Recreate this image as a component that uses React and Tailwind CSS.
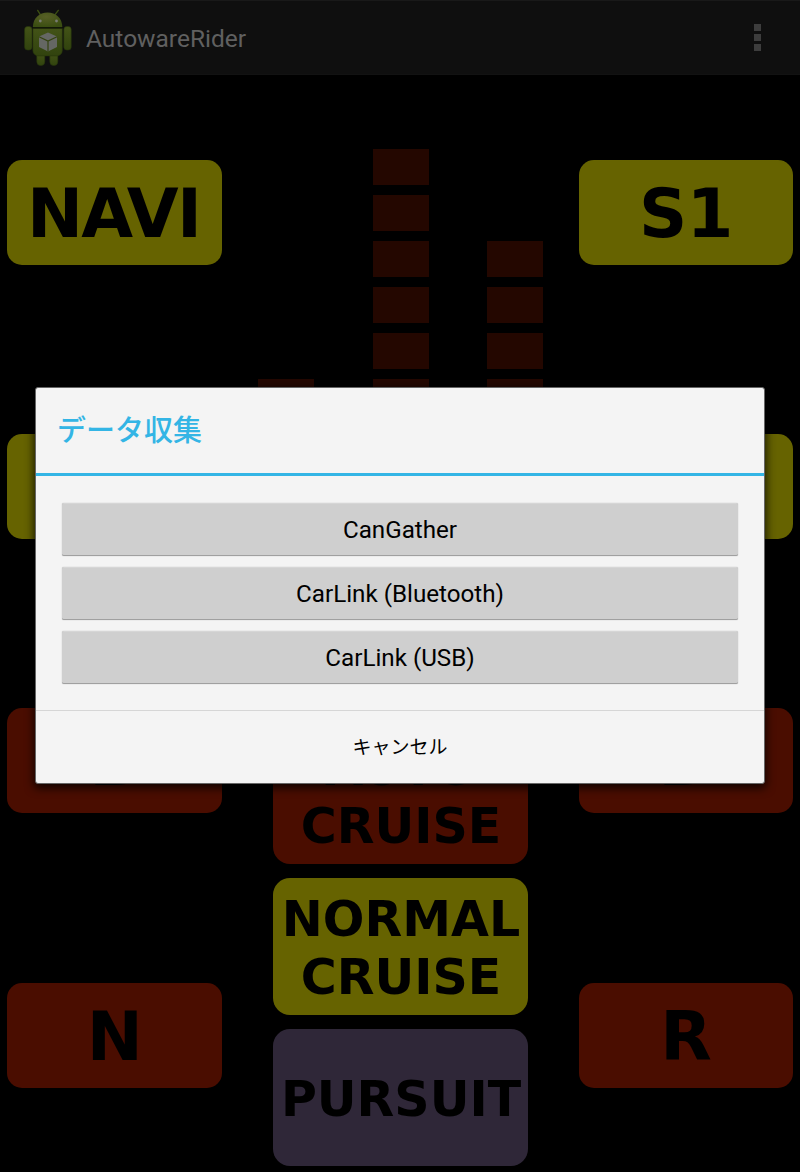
const KEY = {
  yellow: 'bg-[#666300]',
  red: 'bg-[#4a0d00]',
  purple: 'bg-[#2f2738]',
};

function SideKey({ label, color, tight = false }) {
  return (
    <div className={`flex h-[105px] w-full shrink-0 items-center justify-center rounded-[15px] pt-[4px] text-[67px] leading-none font-bold ${tight ? 'pr-[2px] tracking-[-1.8px]' : 'tracking-[-0.5px]'} ${KEY[color]}`}>
      {label}
    </div>
  );
}

function ModeKey({ lines, color }) {
  return (
    <div className={`flex h-[137px] w-full shrink-0 flex-col items-center justify-center rounded-[17px] pt-[4px] pl-px text-[49px] leading-[58px] font-bold whitespace-nowrap ${KEY[color]}`}>
      {lines.map((line) => (
        <span key={line}>{line}</span>
      ))}
    </div>
  );
}

function Meter({ count }) {
  return (
    <div className="flex w-14 flex-col justify-end gap-[10px]">
      {Array.from({ length: count }, (_, i) => (
        <div key={i} className="h-9 shrink-0 bg-[#240700]" />
      ))}
    </div>
  );
}

function RobotIcon() {
  return (
    <svg className="h-[60px] w-[50px] shrink-0" viewBox="0 0 50 60">
      <defs>
        <linearGradient id="body" x1="0" x2="0" y1="0" y2="1">
          <stop offset="0" stopColor="#435317" />
          <stop offset="1" stopColor="#31430e" />
        </linearGradient>
        <radialGradient id="head" cx=".45" cy=".3" r=".7">
          <stop offset="0" stopColor="#575f26" />
          <stop offset="1" stopColor="#3b4e12" />
        </radialGradient>
      </defs>
      <path d="M14.7 2.4 17.2 6.4M35.3 2.4 32.2 6.4" stroke="#3b4e12" strokeWidth="1.4" strokeLinecap="round" />
      <g fill="url(#body)" stroke="#27360b" strokeWidth=".6">
        <rect x="1.6" y="18.5" width="7.4" height="23.5" rx="3" />
        <rect x="40.8" y="18.5" width="7.4" height="23.5" rx="3" />
        <path d="M13.8 45h8v8.6a4 4 0 0 1-8 0zM26.8 45h8v8.6a4 4 0 0 1-8 0z" />
        <path d="M9.9 20.4h29.4v22a5.5 5.5 0 0 1-5.5 5.5H15.4a5.5 5.5 0 0 1-5.5-5.5z" />
      </g>
      <path d="M9.9 19C9.9 10 16.4 4.4 24.6 4.4s14.7 5.6 14.7 14.6z" fill="url(#head)" />
      <path d="M9.9 19.8h29.4" stroke="#151c07" strokeWidth="1" />
      <circle cx="17.3" cy="13" r="1.4" fill="#777b72" />
      <circle cx="33.5" cy="13" r="1.4" fill="#777b72" />
      <path d="M25 24.4 34 28.6V39L25 43.4 16 39V28.6z" fill="#656763" />
      <path d="m16 28.7 9 4.4 9-4.4M25 33.1v10.3" stroke="#34420f" strokeWidth="1.2" fill="none" />
    </svg>
  );
}

function DialogButton({ children }) {
  return (
    <button className="h-[53px] w-full rounded-[2px] border-t border-b border-t-[#d6d6d6] border-b-[#a0a0a0] bg-[#cfcfcf] pt-[2px] text-[24.2px] leading-none text-black shadow-[0_0_1px_#999]">
      {children}
    </button>
  );
}

export default function App() {
  return (
    <div className="relative flex h-[1172px] w-[800px] flex-col overflow-hidden bg-black font-['Roboto','Noto_Sans_CJK_JP',sans-serif]">
      <header className="flex h-[75px] shrink-0 items-center border-t border-b border-t-[#191919] border-b-[#121212] bg-[#0f0f0f] pr-[39px] pl-[23px] text-[#606060]">
        <RobotIcon />
        <h1 className="ml-[13px] pt-[3px] text-[24.5px] leading-none font-normal">AutowareRider</h1>
        <div className="ml-auto flex flex-col gap-[3px]">
          <div className="size-[7px] bg-[#3d3d3d]" />
          <div className="size-[7px] bg-[#3d3d3d]" />
          <div className="size-[7px] bg-[#3d3d3d]" />
        </div>
      </header>

      <main className="flex min-h-0 flex-1 font-['DejaVu_Sans',sans-serif] text-black">
        <div className="flex w-[229px] shrink-0 flex-col gap-[169.3px] pt-[84.9px] pr-[7.3px] pl-[7.4px]">
          <SideKey label="NAVI" color="yellow" tight />
          <SideKey label="MAP" color="yellow" />
          <SideKey label="B" color="red" />
          <SideKey label="N" color="red" />
        </div>

        <div className="flex w-[342px] shrink-0 flex-col">
          <div className="flex h-[652px] shrink-0 justify-between pr-7 pb-9 pl-[29px]">
            <Meter count={7} />
            <Meter count={12} />
            <Meter count={10} />
          </div>
          <div className="flex flex-col gap-[14px] pr-[43px] pl-[44px]">
            <ModeKey lines={['AUTO', 'CRUISE']} color="red" />
            <ModeKey lines={['NORMAL', 'CRUISE']} color="yellow" />
            <ModeKey lines={['PURSUIT']} color="purple" />
          </div>
        </div>

        <div className="flex w-[229px] shrink-0 flex-col gap-[169.2px] pt-[85px] pr-[7.5px] pl-[8.3px]">
          <SideKey label="S1" color="yellow" />
          <SideKey label="S2" color="yellow" />
          <SideKey label="D" color="red" />
          <SideKey label="R" color="red" />
        </div>
      </main>

      <section
        role="dialog"
        className="absolute top-[387px] left-[35px] flex h-[397px] w-[730px] flex-col rounded-[3px] border border-[#666] bg-[#f4f4f4] shadow-[0_3px_10px_1px_rgba(0,0,0,0.8)]"
      >
        <h2 className="flex h-[88px] shrink-0 items-center border-b-[3px] border-[#33b5e5] pt-[2px] pl-[21px] text-[29px] leading-none font-medium text-[#33b5e5]">
          データ収集
        </h2>
        <div className="flex flex-1 flex-col gap-[11px] px-[26px] pt-[27px]">
          <DialogButton>CanGather</DialogButton>
          <DialogButton>CarLink (Bluetooth)</DialogButton>
          <DialogButton>CarLink (USB)</DialogButton>
        </div>
        <button className="h-[73px] shrink-0 border-t border-[#d6d6d6] pt-px text-[19px] leading-none font-normal text-black">
          キャンセル
        </button>
      </section>
    </div>
  );
}
